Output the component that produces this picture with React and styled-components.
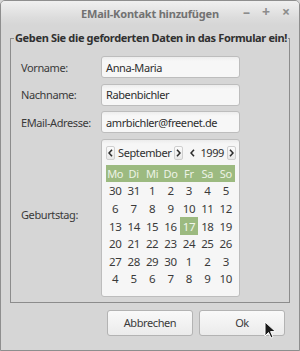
import React from "react";
import styled, { createGlobalStyle } from "styled-components";

const GlobalStyle = createGlobalStyle`
    html, body {
        margin: 0;
        padding: 0;
        background: #d6d6d6;
    }
    body {
        font-family: "Noto Sans", "Open Sans", sans-serif;
        font-size: 11px;
        color: #3a3a3a;
    }
`;

const Window = styled.div`
    position: relative;
    width: 300px;
    height: 351px;
    box-sizing: border-box;
    border: 1px solid #8e8e8e;
    border-radius: 5px 5px 0 0;
    background: #d6d6d6;
    overflow: hidden;
    display: flex;
    flex-direction: column;
`;

const TitleBar = styled.div`
    height: 24px;
    flex: none;
    display: flex;
    align-items: center;
    justify-content: center;
    position: relative;
    background: linear-gradient(#f0f0f0, #dcdcdc 70%, #d6d6d6);
`;

const Title = styled.div`
    font-weight: bold;
    font-size: 11px;
    letter-spacing: -0.2px;
    color: #727272;
`;

const Controls = styled.div`
    position: absolute;
    right: 9px;
    top: 3px;
    display: flex;
    gap: 12px;
    color: #8c8c8c;
    font-size: 14px;
    font-weight: bold;
    line-height: 16px;
`;

const Body = styled.div`
    flex: 1;
    display: flex;
    flex-direction: column;
    padding: 0 9px 0 9px;
`;

const Group = styled.fieldset`
    margin: 6px 0 0 0;
    padding: 11px 0 5px 10px;
    border: 1px solid #8c8c8c;
    min-width: 0;
`;

const Legend = styled.legend`
    font-weight: bold;
    font-size: 11px;
    line-height: 14px;
    letter-spacing: -0.35px;
    white-space: nowrap;
    padding: 0 1px;
    margin-left: -7px;
    color: #303030;
`;

const FormGrid = styled.div`
    display: grid;
    grid-template-columns: 80px 139px;
    row-gap: 5.5px;
    align-items: center;
`;

const Label = styled.div`
    letter-spacing: -0.4px;
    color: #3a3a3a;
    margin-top: ${p => p.$shift || 0}px;
`;

const Input = styled.div`
    height: 22px;
    box-sizing: border-box;
    border: 1px solid #bdbdbd;
    border-radius: 3px;
    background: linear-gradient(#ededed, #f7f7f7 4px);
    padding: 0 4px;
    display: flex;
    align-items: center;
    letter-spacing: -0.4px;
    color: #2e2e2e;
`;

const Calendar = styled.div`
    height: 158px;
    box-sizing: border-box;
    border: 1px solid #bdbdbd;
    border-radius: 3px;
    background: linear-gradient(#ececec, #f6f6f6 4px);
    padding: 5px 3px 0 3px;
`;

const CalHeader = styled.div`
    height: 16px;
    display: flex;
    justify-content: space-between;
    align-items: center;
    padding: 0 0 0 1px;
    overflow: hidden;
`;

const NavGroup = styled.div`
    display: flex;
    align-items: center;
    gap: 3px;
    height: 16px;
`;

const NavButton = styled.div`
    width: 9px;
    height: 14px;
    box-sizing: border-box;
    border: 1px solid ${p => (p.$framed ? "#cfcfcf" : "transparent")};
    border-radius: 2px;
    background: ${p => (p.$framed ? "linear-gradient(#fbfbfb, #e9e9e9)" : "transparent")};
    display: flex;
    align-items: center;
    justify-content: center;
`;

const NavText = styled.span`
    letter-spacing: -0.4px;
    color: #303030;
    font-size: 11px;
    line-height: 16px;
`;

const DayGrid = styled.div`
    margin: 4px 1px 0 1px;
    display: grid;
    grid-template-columns: repeat(7, 1fr);
    grid-auto-rows: 17.6px;
`;

const WeekHead = styled.div`
    display: flex;
    align-items: center;
    justify-content: center;
    background: #9cba80;
    color: #edf3e6;
    letter-spacing: -0.3px;
`;

const Day = styled.div`
    display: flex;
    align-items: center;
    justify-content: center;
    letter-spacing: -0.4px;
    font-size: 11.5px;
    background: ${p => (p.$selected ? "#9cba80" : "transparent")};
    color: ${p => (p.$selected ? "#f2f6ec" : "#3a3a3a")};
`;

const ButtonRow = styled.div`
    display: flex;
    justify-content: flex-end;
    gap: 6px;
    margin-top: 7px;
    padding-right: 5px;
`;

const Button = styled.div`
    width: 86px;
    height: 26px;
    box-sizing: border-box;
    border: 1px solid #b3b3b3;
    border-radius: 3px;
    background: linear-gradient(#f9f9f9, #ebebeb);
    display: flex;
    align-items: center;
    justify-content: center;
    letter-spacing: -0.4px;
    color: #3a3a3a;
`;

const Pointer = styled.svg`
    position: absolute;
    left: 263px;
    top: 320px;
`;

function Chevron({ dir }) {
    return (
        <svg width="5" height="8" viewBox="0 0 5 8">
            <polyline
                points={dir === "left" ? "4,0.8 1,4 4,7.2" : "1,0.8 4,4 1,7.2"}
                fill="none"
                stroke="#2e2e2e"
                strokeWidth="1.6"
            />
        </svg>
    );
}

const weekdays = ["Mo", "Di", "Mi", "Do", "Fr", "Sa", "So"];
const days = [
    30, 31, 1, 2, 3, 4, 5,
    6, 7, 8, 9, 10, 11, 12,
    13, 14, 15, 16, 17, 18, 19,
    20, 21, 22, 23, 24, 25, 26,
    27, 28, 29, 30, 1, 2, 3,
    4, 5, 6, 7, 8, 9, 10,
];

function App() {
    return (
        <>
            <GlobalStyle />
            <Window>
                <TitleBar>
                    <Title>EMail-Kontakt hinzufügen</Title>
                    <Controls>
                        <span>–</span>
                        <span>+</span>
                        <span>×</span>
                    </Controls>
                </TitleBar>
                <Body>
                    <Group>
                        <Legend>Geben Sie die geforderten Daten in das Formular ein!</Legend>
                        <FormGrid>
                            <Label>Vorname:</Label>
                            <Input>Anna-Maria</Input>
                            <Label>Nachname:</Label>
                            <Input>Rabenbichler</Input>
                            <Label>EMail-Adresse:</Label>
                            <Input>amrbichler@freenet.de</Input>
                            <Label $shift={-6}>Geburtstag:</Label>
                            <Calendar>
                                <CalHeader>
                                    <NavGroup>
                                        <NavButton $framed><Chevron dir="left" /></NavButton>
                                        <NavText>September</NavText>
                                        <NavButton $framed><Chevron dir="right" /></NavButton>
                                    </NavGroup>
                                    <NavGroup>
                                        <NavButton><Chevron dir="left" /></NavButton>
                                        <NavText>1999</NavText>
                                        <NavButton $framed><Chevron dir="right" /></NavButton>
                                    </NavGroup>
                                </CalHeader>
                                <DayGrid>
                                    {weekdays.map(w => (
                                        <WeekHead key={w}>{w}</WeekHead>
                                    ))}
                                    {days.map((d, i) => (
                                        <Day key={i} $selected={i === 18}>{d}</Day>
                                    ))}
                                </DayGrid>
                            </Calendar>
                        </FormGrid>
                    </Group>
                    <ButtonRow>
                        <Button>Abbrechen</Button>
                        <Button>Ok</Button>
                    </ButtonRow>
                </Body>
                <Pointer width="13" height="19" viewBox="0 0 13 19">
                    <path
                        d="M1 1 L1 15 L4.5 11.5 L7 17 L9 16 L6.6 10.6 L11.5 10.6 Z"
                        fill="#1a1a1a"
                        stroke="#ffffff"
                        strokeWidth="1"
                        strokeLinejoin="round"
                    />
                </Pointer>
            </Window>
        </>
    );
}

export default App;
